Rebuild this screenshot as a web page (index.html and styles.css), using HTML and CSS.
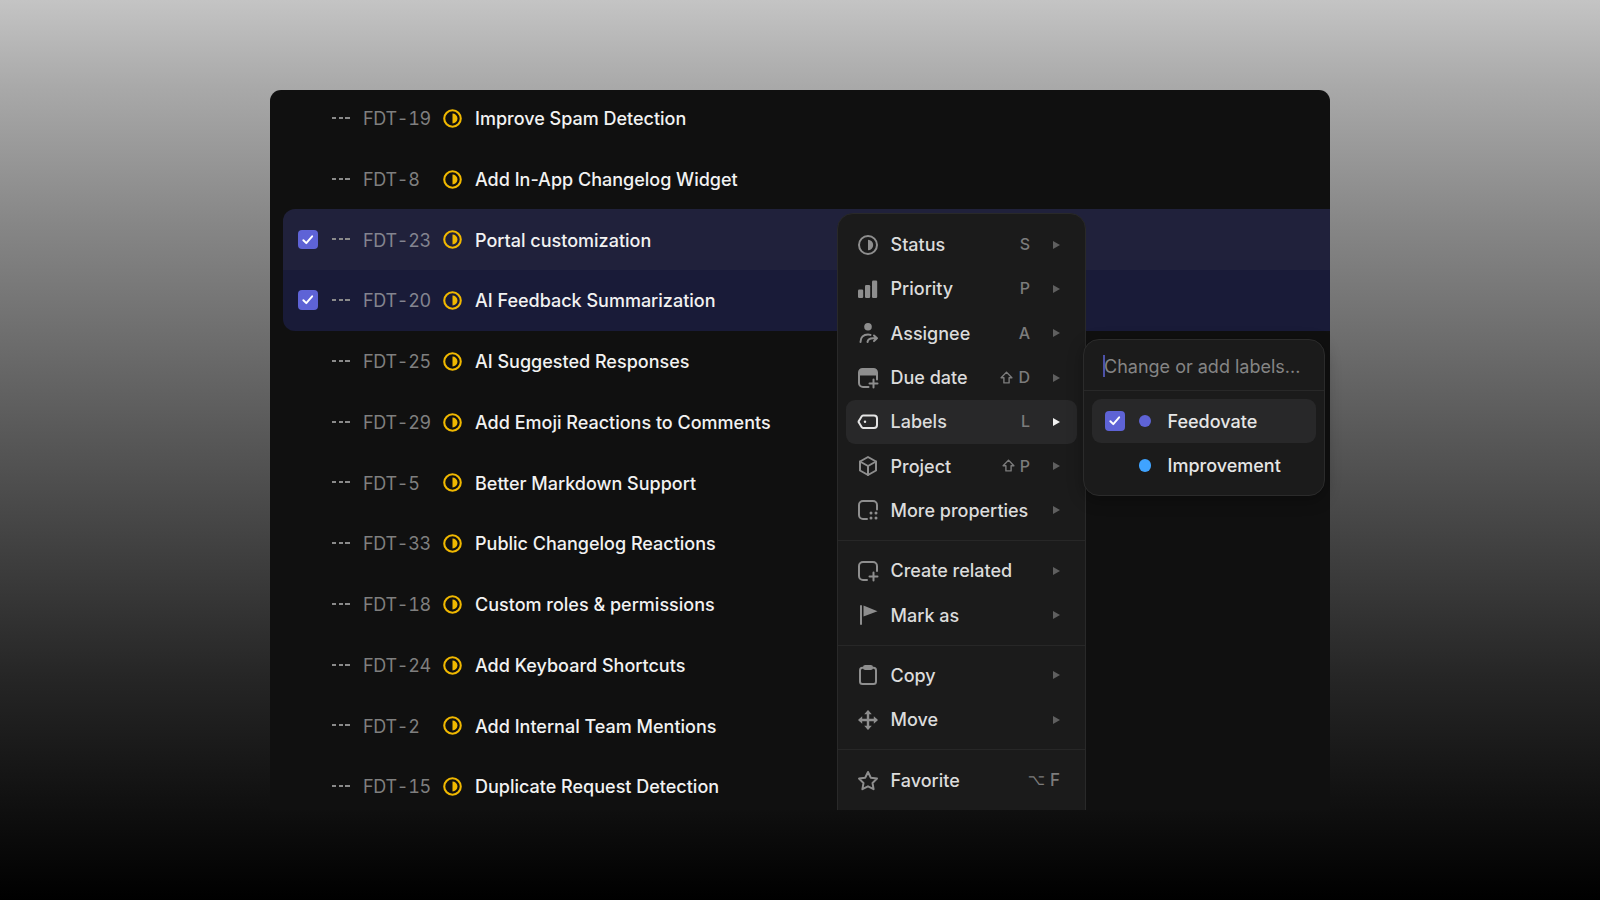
FILE: index.html
```html
<!DOCTYPE html>
<html lang="en">
<head>
    <meta charset="UTF-8">
    <title>Issue list</title>
    <link rel="stylesheet" href="styles.css">
</head>
<body>
    <svg class="defs" width="0" height="0">
        <symbol id="progress" viewBox="0 0 20 20">
            <circle cx="10" cy="10" r="8.700" fill="none" stroke="currentColor" stroke-width="2.200"/>
            <path d="M10 4.800a5.200 5.200 0 0 1 0 10.400z" fill="currentColor"/>
        </symbol>
        <symbol id="shift" viewBox="0 0 14 14">
            <path d="M7 1.200l5.800 6H9.800v5.600H4.200V7.200H1.200z" fill="none" stroke="currentColor" stroke-width="1.500" stroke-linejoin="round"/>
        </symbol>
    </svg>

    <div class="panel">
        <div class="issues">
            <div class="issue"><span class="box"></span><span class="dashes"></span><span class="id">FDT-19</span><svg class="state"><use href="#progress"/></svg><span class="title">Improve Spam Detection</span></div>
            <div class="issue"><span class="box"></span><span class="dashes"></span><span class="id">FDT-8</span><svg class="state"><use href="#progress"/></svg><span class="title">Add In-App Changelog Widget</span></div>
            <div class="issue selected first">
                <span class="box checked"><svg viewBox="0 0 20 20"><path d="M5.500 10.500l3 3 6-7"/></svg></span>
                <span class="dashes"></span><span class="id">FDT-23</span><svg class="state"><use href="#progress"/></svg><span class="title">Portal customization</span>
            </div>
            <div class="issue selected last">
                <span class="box checked"><svg viewBox="0 0 20 20"><path d="M5.500 10.500l3 3 6-7"/></svg></span>
                <span class="dashes"></span><span class="id">FDT-20</span><svg class="state"><use href="#progress"/></svg><span class="title">AI Feedback Summarization</span>
            </div>
            <div class="issue"><span class="box"></span><span class="dashes"></span><span class="id">FDT-25</span><svg class="state"><use href="#progress"/></svg><span class="title">AI Suggested Responses</span></div>
            <div class="issue"><span class="box"></span><span class="dashes"></span><span class="id">FDT-29</span><svg class="state"><use href="#progress"/></svg><span class="title">Add Emoji Reactions to Comments</span></div>
            <div class="issue"><span class="box"></span><span class="dashes"></span><span class="id">FDT-5</span><svg class="state"><use href="#progress"/></svg><span class="title">Better Markdown Support</span></div>
            <div class="issue"><span class="box"></span><span class="dashes"></span><span class="id">FDT-33</span><svg class="state"><use href="#progress"/></svg><span class="title">Public Changelog Reactions</span></div>
            <div class="issue"><span class="box"></span><span class="dashes"></span><span class="id">FDT-18</span><svg class="state"><use href="#progress"/></svg><span class="title">Custom roles &amp; permissions</span></div>
            <div class="issue"><span class="box"></span><span class="dashes"></span><span class="id">FDT-24</span><svg class="state"><use href="#progress"/></svg><span class="title">Add Keyboard Shortcuts</span></div>
            <div class="issue"><span class="box"></span><span class="dashes"></span><span class="id">FDT-2</span><svg class="state"><use href="#progress"/></svg><span class="title">Add Internal Team Mentions</span></div>
            <div class="issue"><span class="box"></span><span class="dashes"></span><span class="id">FDT-15</span><svg class="state"><use href="#progress"/></svg><span class="title">Duplicate Request Detection</span></div>
        </div>

        <!-- context menu -->
        <div class="menu">
            <div class="menu-group">
                <div class="menu-item">
                    <svg class="icon" viewBox="0 0 20 20"><circle cx="10" cy="10" r="9"/><path class="fill" d="M10 4.800a5.200 5.200 0 0 1 0 10.400z"/></svg>
                    <span class="label">Status</span><span class="keys">S</span><i class="arrow"></i>
                </div>
                <div class="menu-item">
                    <svg class="icon" viewBox="0 0 20 20"><rect class="fill" x="0" y="10.500" width="5.200" height="8.500" rx="1.200"/><rect class="fill" x="7" y="6" width="5.200" height="13" rx="1.200"/><rect class="fill" x="14" y="1.500" width="5.200" height="17.500" rx="1.200"/></svg>
                    <span class="label">Priority</span><span class="keys">P</span><i class="arrow"></i>
                </div>
                <div class="menu-item">
                    <svg class="icon" viewBox="0 0 20 20"><circle class="fill" cx="10" cy="3.800" r="3.800"/><path d="M2.500 19c0-4.500 3-7.500 7.500-7.500 1 0 1.800.1 2.500.4"/><path d="M9.500 19c.4-2.500 2.500-3.700 5.500-3.700h4M16 12.500l3 2.800-3 2.800"/></svg>
                    <span class="label">Assignee</span><span class="keys">A</span><i class="arrow"></i>
                </div>
                <div class="menu-item">
                    <svg class="icon" viewBox="0 0 20 20"><path d="M10.500 19H5a4 4 0 0 1-4-4V6"/><path d="M19 11.500V6"/><path class="fill" d="M0 7.500V4.500A4.500 4.500 0 0 1 4.500 0h11A4.500 4.500 0 0 1 20 4.500V7.500z"/><path d="M15.500 11.500v8M11.500 15.500h8"/></svg>
                    <span class="label">Due date</span><span class="keys"><svg class="shift"><use href="#shift"/></svg> D</span><i class="arrow"></i>
                </div>
                <div class="menu-item active">
                    <svg class="icon" viewBox="0 0 20 20"><path d="M5.300 3.500h10.700a3 3 0 0 1 3 3v6.500a3 3 0 0 1-3 3H5.300a2 2 0 0 1-1.400-.6L1.200 11a1.800 1.800 0 0 1 0-2.500l2.700-4.400a2 2 0 0 1 1.400-.6z"/><circle class="fill" cx="7" cy="9.800" r="1.200"/></svg>
                    <span class="label">Labels</span><span class="keys">L</span><i class="arrow"></i>
                </div>
                <div class="menu-item">
                    <svg class="icon" viewBox="0 0 20 20"><path d="M10 1l8 4.500v9L10 19l-8-4.500v-9z"/><path d="M2 5.500l8 4.500 8-4.500M10 10v9"/></svg>
                    <span class="label">Project</span><span class="keys"><svg class="shift"><use href="#shift"/></svg> P</span><i class="arrow"></i>
                </div>
                <div class="menu-item">
                    <svg class="icon" viewBox="0 0 20 20"><path d="M9 19H5a4 4 0 0 1-4-4V5a4 4 0 0 1 4-4h10a4 4 0 0 1 4 4v4.500"/><g class="fill"><circle cx="13" cy="13" r="1.500"/><circle cx="18" cy="13" r="1.500"/><circle cx="13" cy="18" r="1.500"/><circle cx="18" cy="18" r="1.500"/></g></svg>
                    <span class="label">More properties</span><i class="arrow"></i>
                </div>
            </div>
            <div class="menu-group">
                <div class="menu-item">
                    <svg class="icon" viewBox="0 0 20 20"><path d="M9 19H5a4 4 0 0 1-4-4V5a4 4 0 0 1 4-4h10a4 4 0 0 1 4 4v5"/><path d="M15.500 11.500v8M11.500 15.500h8"/></svg>
                    <span class="label">Create related</span><i class="arrow"></i>
                </div>
                <div class="menu-item">
                    <svg class="icon" viewBox="0 0 20 20"><path d="M3 1v18"/><path class="fill" d="M5.500 0.500l14 5.800-14 5.200z"/></svg>
                    <span class="label">Mark as</span><i class="arrow"></i>
                </div>
            </div>
            <div class="menu-group">
                <div class="menu-item">
                    <svg class="icon" viewBox="0 0 20 20"><rect x="2" y="2.800" width="16" height="16.200" rx="2.500"/><rect x="6" y="1" width="8" height="3" rx="1.200"/></svg>
                    <span class="label">Copy</span><i class="arrow"></i>
                </div>
                <div class="menu-item">
                    <svg class="icon" viewBox="0 0 20 20"><path d="M10 2v16M2 10h16" stroke-width="2.400"/><path class="fill" d="M10 0l3.800 4.200H6.200zM10 20l-3.800-4.200h7.600zM0 10l4.200-3.800v7.600zM20 10l-4.200 3.800V6.200z"/></svg>
                    <span class="label">Move</span><i class="arrow"></i>
                </div>
            </div>
            <div class="menu-group last-group">
                <div class="menu-item">
                    <svg class="icon" viewBox="0 0 20 20"><path d="M10 1l2.800 5.700 6.200.9-4.500 4.400 1.100 6.200L10 15.300 4.400 18.200l1.100-6.200L1 7.600l6.200-.9z"/></svg>
                    <span class="label">Favorite</span><span class="keys wide"><b>⌥</b> F</span>
                </div>
            </div>
        </div>
    </div>

    <!-- labels submenu, sticks out of the panel -->
    <div class="submenu">
        <div class="search"><span class="caret"></span>Change or add labels...</div>
        <div class="sub-list">
            <div class="sub-item active">
                <span class="box checked"><svg viewBox="0 0 20 20"><path d="M5.500 10.500l3 3 6-7"/></svg></span>
                <span class="dot purple"></span>Feedovate
            </div>
            <div class="sub-item">
                <span class="box"></span>
                <span class="dot blue"></span>Improvement
            </div>
        </div>
    </div>
</body>
</html>
```

FILE: styles.css
```css
* {
    box-sizing: border-box;
}

body {
    font-family: Inter, "Noto Sans", sans-serif;
    background: linear-gradient(180deg, #c4c4c4 0%, #a8a8a8 10%, #868686 25%, #555 50%, #262626 75%, #000 100%);
    margin: 0;
    padding: 90px 0 0 270px;
    height: 900px;
    overflow: hidden;
    position: relative;
    color: #f2f2f2;
}

.defs {
    position: absolute;
}

.panel {
    width: 1060px;
    height: 720px;
    background: #101010;
    border-radius: 11px 11px 0 0;
    overflow: hidden;
    position: relative;
}

.issues {
    margin: -2.500px 0 0 13px;
}

.issue {
    height: 60.750px;
    display: flex;
    align-items: center;
    padding-left: 15px;
    font-size: 18px;
}

.issue.selected.first {
    background: #20213b;
    border-top-left-radius: 12px;
}

.issue.selected.last {
    background: #191b38;
    border-bottom-left-radius: 12px;
}

.box {
    width: 19.500px;
    height: 19.500px;
    border-radius: 4px;
    flex: none;
    display: block;
}

.box.checked {
    background: #5e63d6;
}

.box svg {
    display: block;
    fill: none;
    stroke: #fff;
    stroke-width: 2;
    stroke-linecap: round;
    stroke-linejoin: round;
}

.dashes {
    width: 18px;
    height: 2px;
    margin-left: 14.500px;
    flex: none;
    background: repeating-linear-gradient(90deg, #8a8a8a 0 4.500px, transparent 4.500px 6.750px);
}

.id {
    width: 80px;
    margin: 1.500px 0 0 13px;
    color: #7f7f7f;
    letter-spacing: -0.300px;
    font-variant-numeric: tabular-nums;
    flex: none;
}

.selected .id {
    color: #83848f;
}

.state {
    width: 19px;
    height: 19px;
    margin-top: 1px;
    color: #f0b800;
    flex: none;
}

.title {
    margin: 1.500px 0 0 13px;
    font-weight: 450;
    color: #f2f2f2;
}

.menu {
    position: absolute;
    left: 567px;
    top: 122.500px;
    width: 249px;
    height: 620px;
    background: #1b1b1b;
    border: 1px solid #292929;
    border-radius: 16px 16px 0 0;
    color: #dcdcdc;
    font-size: 18px;
}

.menu-group {
    padding: 7.500px 8px;
    border-top: 1px solid #272727;
}

.menu-group:first-child {
    border-top: none;
    padding-top: 9px;
}

.menu-group.last-group {
    padding-top: 8.500px;
}

.menu-item {
    height: 44.300px;
    display: flex;
    align-items: center;
    padding: 0 17px 0 12px;
    border-radius: 9px;
}

.menu-item.active {
    background: #282829;
}

.icon {
    width: 20px;
    height: 20px;
    flex: none;
    fill: none;
    stroke: #8e8e8e;
    stroke-width: 2;
    stroke-linecap: round;
    stroke-linejoin: round;
    overflow: visible;
}

.icon .fill {
    fill: #8e8e8e;
    stroke: none;
}

.active .icon {
    stroke: #e4e4e4;
}

.active .icon .fill {
    fill: #e4e4e4;
}

.label {
    margin-left: 12.500px;
    flex: 1;
    font-weight: 450;
}

.keys {
    color: #7c7c7c;
    font-size: 16px;
    font-weight: 500;
    margin: -1px 23px 0 0;
    display: flex;
    align-items: center;
    gap: 5px;
}

.shift {
    width: 13px;
    height: 13px;
    color: #7c7c7c;
}

.keys b {
    font-family: "DejaVu Sans", sans-serif;
    font-size: 15px;
    font-weight: 400;
}

.keys.wide {
    margin-right: 0;
    font-size: 17px;
}

.arrow {
    width: 0;
    height: 0;
    flex: none;
    border-left: 7px solid #5f5f5f;
    border-top: 4px solid transparent;
    border-bottom: 4px solid transparent;
}

.active .arrow {
    border-left-color: #f0f0f0;
}

.submenu {
    position: absolute;
    left: 1083px;
    top: 339px;
    width: 242px;
    height: 157px;
    background: #1b1b1b;
    border: 1px solid #2b2b2b;
    border-radius: 16px;
    font-size: 18px;
    box-shadow: 0 4px 16px rgba(0, 0, 0, 0.3);
}

.search {
    height: 51px;
    padding: 3px 0 0 20px;
    display: flex;
    align-items: center;
    color: #858585;
    border-bottom: 1px solid #282828;
    position: relative;
}

.caret {
    position: absolute;
    left: 19px;
    top: 15px;
    width: 1.500px;
    height: 22px;
    background: #4d52a8;
}

.sub-list {
    padding: 8px;
}

.sub-item {
    height: 44.300px;
    display: flex;
    align-items: center;
    padding-left: 13px;
    border-radius: 9px;
    font-weight: 450;
    color: #e6e6e6;
}

.sub-item.active {
    background: #282829;
}

.dot {
    width: 12.500px;
    height: 12.500px;
    border-radius: 50%;
    margin: 0 16.500px 0 14px;
    flex: none;
}

.dot.purple {
    background: #5e63d6;
}

.dot.blue {
    background: #3fa3ff;
}
```
